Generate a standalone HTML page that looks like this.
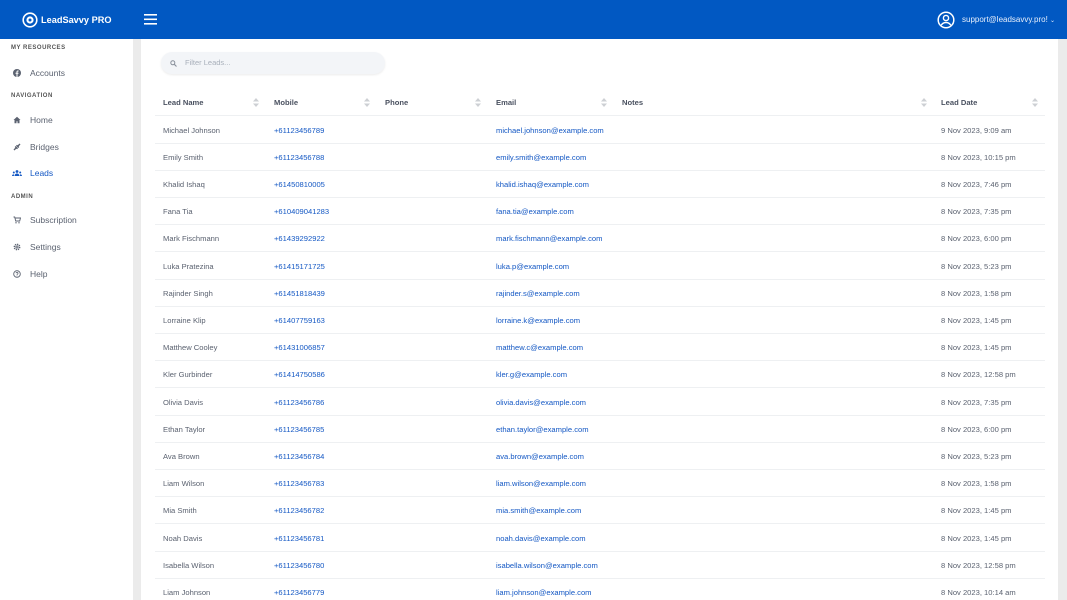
<!DOCTYPE html>
<html style="overflow:hidden"><head><meta charset="utf-8"><style>
*{box-sizing:border-box;margin:0;padding:0}
body{width:1067px;height:600px;overflow:hidden;font-family:"Liberation Sans",sans-serif;background:#ebebeb;position:relative}
.top{position:absolute;left:0;top:0;width:1067px;height:39px;background:#0158c2}
.logo{position:absolute;left:22px;top:12px;color:#fff;font-weight:bold;font-size:9.2px;display:flex;align-items:center;gap:3px}
.side{position:absolute;left:0;top:39px;width:133px;height:561px;background:#fff}
.sec{position:absolute;left:11px;font-size:6px;letter-spacing:.5px;color:#555;font-weight:bold;line-height:7px}
.it{position:absolute;left:13px;font-size:8.5px;color:#5b6270;height:10px;line-height:10px;width:110px}
.it .ic{position:absolute;left:0;top:1px;width:8px;height:8px}
.it span{position:absolute;left:17px;top:0;white-space:nowrap}
.card{position:absolute;left:141px;top:39px;width:917px;height:561px;background:#fff}
.filter{position:absolute;left:161px;top:52px;width:224px;height:22px;border-radius:11px;background:#f3f5f8;box-shadow:0 1px 2px rgba(0,0,0,.08);font-size:7.5px;color:#a8afba;padding:6px 0 0 24px}
.row{position:absolute;left:155px;width:890px;height:27.2px;border-bottom:1px solid #eef0f2;font-size:7.6px;color:#5b6270}
.row div{position:absolute;top:9px;white-space:nowrap;line-height:9px}
.b{color:#1458c4}
.h{font-weight:bold;color:#4a5160}
.s svg{display:block}
</style></head><body>
<div class="top">
<div class="logo"><svg width="16" height="16" viewBox="0 0 16 16"><circle cx="8" cy="8" r="6.8" fill="none" stroke="#fff" stroke-width="1.6"/><circle cx="8" cy="8" r="3.6" fill="#fff"/><circle cx="8" cy="8" r="1.5" fill="#0158c2"/></svg>LeadSavvy PRO</div>
<svg style="position:absolute;left:144px;top:14px" width="13" height="11"><rect y="0" width="13" height="1.6" fill="#fff"/><rect y="4.5" width="13" height="1.6" fill="#fff"/><rect y="9" width="13" height="1.6" fill="#fff"/></svg>
<svg style="position:absolute;left:937px;top:11px" width="18" height="18" viewBox="0 0 18 18"><circle cx="9" cy="9" r="7.8" fill="none" stroke="#fff" stroke-width="1.5"/><circle cx="9" cy="7" r="2.6" fill="none" stroke="#fff" stroke-width="1.4"/><path d="M4.2 14.2c1.2-2 2.8-2.7 4.8-2.7s3.6.7 4.8 2.7" fill="none" stroke="#fff" stroke-width="1.4"/></svg>
<div style="position:absolute;left:962px;top:15px;color:#e6eefb;font-size:8px">support@leadsavvy.pro! <span style="font-size:6px">&#8964;</span></div>
</div>
<div class="side">
<div class="sec" style="top:6px">MY RESOURCES</div>
<div class="it" style="top:29px"><svg class="ic" viewBox="0 0 8 8"><circle cx="4" cy="4" r="4" fill="#5b6270"/><path d="M4.5 8V4.8h1V3.8h-1V3c0-.4.2-.5.5-.5h.6v-1H4.8C4 1.5 3.5 2 3.5 2.8v1h-1v1h1V8z" fill="#fff"/></svg><span>Accounts</span></div>
<div class="sec" style="top:54px">NAVIGATION</div>
<div class="it" style="top:76px"><svg class="ic" viewBox="0 0 8 8"><path d="M4 .8L.5 4h1v3.3h2V5.3h1v2h2V4h1z" fill="#5b6270"/></svg><span>Home</span></div>
<div class="it" style="top:103px"><svg class="ic" viewBox="0 0 8 8"><path d="M1 7L3 5M5 3L7 1M2.2 3.5L4.5 5.8M3.5 2.2L5.8 4.5" stroke="#5b6270" stroke-width="1.4"/></svg><span>Bridges</span></div>
<div class="it" style="top:129px;color:#1458c4"><svg class="ic" style="width:10px;left:-1px" viewBox="0 0 10 8"><circle cx="5" cy="2.5" r="1.4" fill="#1458c4"/><circle cx="1.8" cy="3.5" r="1" fill="#1458c4"/><circle cx="8.2" cy="3.5" r="1" fill="#1458c4"/><path d="M2.5 7c0-1.5 1.2-2.5 2.5-2.5S7.5 5.5 7.5 7zM0 7c0-1 .7-1.8 1.8-1.8L2 7zM10 7c0-1-.7-1.8-1.8-1.8L8 7z" fill="#1458c4"/></svg><span>Leads</span></div>
<div class="sec" style="top:155px">ADMIN</div>
<div class="it" style="top:176px"><svg class="ic" viewBox="0 0 8 8"><path d="M.5 1h1.2l1 4h4l.8-3H2.2" fill="none" stroke="#5b6270" stroke-width=".9"/><circle cx="3" cy="6.8" r=".7" fill="#5b6270"/><circle cx="6" cy="6.8" r=".7" fill="#5b6270"/></svg><span>Subscription</span></div>
<div class="it" style="top:203px"><svg class="ic" viewBox="0 0 8 8"><circle cx="4" cy="4" r="2.6" fill="none" stroke="#5b6270" stroke-width="1.6" stroke-dasharray="1.2 .8"/><circle cx="4" cy="4" r="1" fill="none" stroke="#5b6270" stroke-width=".8"/></svg><span>Settings</span></div>
<div class="it" style="top:230px"><svg class="ic" viewBox="0 0 8 8"><circle cx="4" cy="4" r="3.3" fill="none" stroke="#5b6270" stroke-width=".9"/><path d="M3 3.2a1 1 0 1 1 1.5.9c-.4.2-.5.4-.5.8" fill="none" stroke="#5b6270" stroke-width=".8"/><circle cx="4" cy="5.9" r=".45" fill="#5b6270"/></svg><span>Help</span></div>
</div>
<div class="card"></div>
<div class="filter"><svg style="position:absolute;left:9px;top:8px" width="7" height="7" viewBox="0 0 7 7"><circle cx="2.8" cy="2.8" r="2" fill="none" stroke="#8a919c" stroke-width="1"/><path d="M4.3 4.3L6.5 6.5" stroke="#8a919c" stroke-width="1.1"/></svg>Filter Leads...</div>
<div class="row h" style="top:89px">
<div style="left:8px">Lead Name</div><div class="s" style="left:98px;top:9px"><svg width="6" height="9" viewBox="0 0 6 9"><path d="M3 0L6 3.5H0zM3 9L0 5.5H6z" fill="#cdd0d4"/></svg></div>
<div style="left:119px">Mobile</div><div class="s" style="left:209px"><svg width="6" height="9" viewBox="0 0 6 9"><path d="M3 0L6 3.5H0zM3 9L0 5.5H6z" fill="#cdd0d4"/></svg></div>
<div style="left:230px">Phone</div><div class="s" style="left:320px"><svg width="6" height="9" viewBox="0 0 6 9"><path d="M3 0L6 3.5H0zM3 9L0 5.5H6z" fill="#cdd0d4"/></svg></div>
<div style="left:341px">Email</div><div class="s" style="left:446px"><svg width="6" height="9" viewBox="0 0 6 9"><path d="M3 0L6 3.5H0zM3 9L0 5.5H6z" fill="#cdd0d4"/></svg></div>
<div style="left:467px">Notes</div><div class="s" style="left:766px"><svg width="6" height="9" viewBox="0 0 6 9"><path d="M3 0L6 3.5H0zM3 9L0 5.5H6z" fill="#cdd0d4"/></svg></div>
<div style="left:786px">Lead Date</div><div class="s" style="left:877px"><svg width="6" height="9" viewBox="0 0 6 9"><path d="M3 0L6 3.5H0zM3 9L0 5.5H6z" fill="#cdd0d4"/></svg></div>
</div>
<div id="rows"></div>
<script>
const d=[["Michael Johnson","+61123456789","michael.johnson@example.com","9 Nov 2023, 9:09 am"],
["Emily Smith","+61123456788","emily.smith@example.com","8 Nov 2023, 10:15 pm"],
["Khalid Ishaq","+61450810005","khalid.ishaq@example.com","8 Nov 2023, 7:46 pm"],
["Fana Tia","+610409041283","fana.tia@example.com","8 Nov 2023, 7:35 pm"],
["Mark Fischmann","+61439292922","mark.fischmann@example.com","8 Nov 2023, 6:00 pm"],
["Luka Pratezina","+61415171725","luka.p@example.com","8 Nov 2023, 5:23 pm"],
["Rajinder Singh","+61451818439","rajinder.s@example.com","8 Nov 2023, 1:58 pm"],
["Lorraine Klip","+61407759163","lorraine.k@example.com","8 Nov 2023, 1:45 pm"],
["Matthew Cooley","+61431006857","matthew.c@example.com","8 Nov 2023, 1:45 pm"],
["Kler Gurbinder","+61414750586","kler.g@example.com","8 Nov 2023, 12:58 pm"],
["Olivia Davis","+61123456786","olivia.davis@example.com","8 Nov 2023, 7:35 pm"],
["Ethan Taylor","+61123456785","ethan.taylor@example.com","8 Nov 2023, 6:00 pm"],
["Ava Brown","+61123456784","ava.brown@example.com","8 Nov 2023, 5:23 pm"],
["Liam Wilson","+61123456783","liam.wilson@example.com","8 Nov 2023, 1:58 pm"],
["Mia Smith","+61123456782","mia.smith@example.com","8 Nov 2023, 1:45 pm"],
["Noah Davis","+61123456781","noah.davis@example.com","8 Nov 2023, 1:45 pm"],
["Isabella Wilson","+61123456780","isabella.wilson@example.com","8 Nov 2023, 12:58 pm"],
["Liam Johnson","+61123456779","liam.johnson@example.com","8 Nov 2023, 10:14 am"]];
let h="";d.forEach((r,i)=>{h+=`<div class="row" style="top:${116.5+i*27.2}px"><div style="left:8px">${r[0]}</div><div class="b" style="left:119px">${r[1]}</div><div class="b" style="left:341px">${r[2]}</div><div style="left:786px">${r[3]}</div></div>`});
document.getElementById("rows").innerHTML=h;
</script>
</body></html>
